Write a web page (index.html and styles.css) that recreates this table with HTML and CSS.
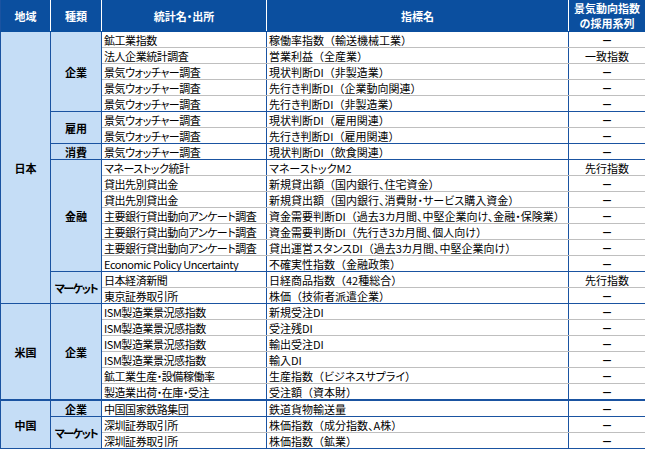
FILE: index.html
```html
<!DOCTYPE html>
<html lang="ja">
<head>
<meta charset="utf-8">
<title>景気動向指数</title>
<link rel="stylesheet" href="styles.css">
</head>
<body>
<table class="tbl">
<colgroup>
<col class="c1"><col class="c2"><col class="c3"><col class="c4"><col class="c5">
</colgroup>
<thead>
<tr class="head">
<th>地域</th><th>種類</th><th>統計名・出所</th><th>指標名</th><th class="last">景気動向指数<br>の採用系列</th>
</tr>
</thead>
<tbody>
<tr><td class="region" rowspan="17">日本</td><td class="cat" rowspan="5">企業</td><td class="s">鉱工業指数</td><td>稼働率指数<span class="pn">（</span>輸送機械工業<span class="pn">）</span></td><td class="val"><span class="dash">－</span></td></tr>
<tr><td class="s">法人企業統計調査</td><td>営業利益<span class="pn">（</span>全産業<span class="pn">）</span></td><td class="val">一致指数</td></tr>
<tr><td class="s">景気ウォッチャー調査</td><td>現状判断DI<span class="pn">（</span>非製造業<span class="pn">）</span></td><td class="val"><span class="dash">－</span></td></tr>
<tr><td class="s">景気ウォッチャー調査</td><td>先行き判断DI<span class="pn">（</span>企業動向関連<span class="pn">）</span></td><td class="val"><span class="dash">－</span></td></tr>
<tr class="end"><td class="s">景気ウォッチャー調査</td><td>先行き判断DI<span class="pn">（</span>非製造業<span class="pn">）</span></td><td class="val"><span class="dash">－</span></td></tr>
<tr><td class="cat" rowspan="2">雇用</td><td class="s">景気ウォッチャー調査</td><td>現状判断DI<span class="pn">（</span>雇用関連<span class="pn">）</span></td><td class="val"><span class="dash">－</span></td></tr>
<tr class="end"><td class="s">景気ウォッチャー調査</td><td>先行き判断DI<span class="pn">（</span>雇用関連<span class="pn">）</span></td><td class="val"><span class="dash">－</span></td></tr>
<tr class="end"><td class="cat">消費</td><td class="s">景気ウォッチャー調査</td><td>現状判断DI<span class="pn">（</span>飲食関連<span class="pn">）</span></td><td class="val"><span class="dash">－</span></td></tr>
<tr><td class="cat" rowspan="7">金融</td><td class="s">マネーストック統計</td><td>マネーストックM2</td><td class="val">先行指数</td></tr>
<tr><td class="s">貸出先別貸出金</td><td>新規貸出額<span class="pn">（</span>国内銀行、住宅資金<span class="pn">）</span></td><td class="val"><span class="dash">－</span></td></tr>
<tr><td class="s">貸出先別貸出金</td><td>新規貸出額<span class="pn">（</span>国内銀行、消費財・サービス購入資金<span class="pn">）</span></td><td class="val"><span class="dash">－</span></td></tr>
<tr><td class="s">主要銀行貸出動向アンケート調査</td><td>資金需要判断DI<span class="pn">（</span>過去3カ月間、中堅企業向け、金融・保険業<span class="pn">）</span></td><td class="val"><span class="dash">－</span></td></tr>
<tr><td class="s">主要銀行貸出動向アンケート調査</td><td>資金需要判断DI<span class="pn">（</span>先行き3カ月間、個人向け<span class="pn">）</span></td><td class="val"><span class="dash">－</span></td></tr>
<tr><td class="s">主要銀行貸出動向アンケート調査</td><td>貸出運営スタンスDI<span class="pn">（</span>過去3カ月間、中堅企業向け<span class="pn">）</span></td><td class="val"><span class="dash">－</span></td></tr>
<tr class="end"><td class="s">Economic Policy Uncertainty</td><td>不確実性指数<span class="pn">（</span>金融政策<span class="pn">）</span></td><td class="val"><span class="dash">－</span></td></tr>
<tr><td class="cat mk" rowspan="2">マーケット</td><td class="s">日本経済新聞</td><td>日経商品指数<span class="pn">（</span>42種総合<span class="pn">）</span></td><td class="val">先行指数</td></tr>
<tr class="end"><td class="s">東京証券取引所</td><td>株価<span class="pn">（</span>技術者派遣企業<span class="pn">）</span></td><td class="val"><span class="dash">－</span></td></tr>
<tr><td class="region thick" rowspan="6">米国</td><td class="cat thick" rowspan="6">企業</td><td class="s">ISM製造業景況感指数</td><td>新規受注DI</td><td class="val"><span class="dash">－</span></td></tr>
<tr><td class="s">ISM製造業景況感指数</td><td>受注残DI</td><td class="val"><span class="dash">－</span></td></tr>
<tr><td class="s">ISM製造業景況感指数</td><td>輸出受注DI</td><td class="val"><span class="dash">－</span></td></tr>
<tr><td class="s">ISM製造業景況感指数</td><td>輸入DI</td><td class="val"><span class="dash">－</span></td></tr>
<tr><td class="s">鉱工業生産・設備稼働率</td><td>生産指数<span class="pn">（</span>ビジネスサプライ<span class="pn">）</span></td><td class="val"><span class="dash">－</span></td></tr>
<tr class="end thickend"><td class="s">製造業出荷・在庫・受注</td><td>受注額<span class="pn">（</span>資本財<span class="pn">）</span></td><td class="val"><span class="dash">－</span></td></tr>
<tr class="end"><td class="region" rowspan="3">中国</td><td class="cat">企業</td><td class="s">中国国家鉄路集団</td><td>鉄道貨物輸送量</td><td class="val"><span class="dash">－</span></td></tr>
<tr><td class="cat mk" rowspan="2">マーケット</td><td class="s">深圳証券取引所</td><td>株価指数<span class="pn">（</span>成分指数、A株<span class="pn">）</span></td><td class="val"><span class="dash">－</span></td></tr>
<tr class="end"><td class="s">深圳証券取引所</td><td>株価指数<span class="pn">（</span>鉱業<span class="pn">）</span></td><td class="val"><span class="dash">－</span></td></tr>
</tbody>
</table>
</body>
</html>
```
FILE: styles.css
```css
html, body {
  margin: 0;
  padding: 0;
  background: #ffffff;
}
body {
  font-family: "Noto Sans CJK JP", "Noto Sans", sans-serif;
  font-size: 11px;
  color: #000;
  font-feature-settings: "palt";
}
.tbl {
  border-collapse: collapse;
  table-layout: fixed;
  width: 645px;
}
.c1 { width: 50px; }
.c2 { width: 51px; }
.c3 { width: 165px; }
.c4 { width: 302px; }
.c5 { width: 77px; }

.head th {
  height: 31px;
  padding: 0;
  background: #0b4f9f;
  color: #fff;
  font-weight: bold;
  font-size: 11px;
  line-height: 16px;
  text-align: center;
  vertical-align: middle;
  border-left: 1px solid #ffffff;
  border-right: 1px solid #ffffff;
  border-top: none;
  border-bottom: 1px solid #0b4f9f;
}
.head th:first-child { border-left: 1px solid #1a53a1; }
.head th.last { border-right: 1px solid #1a53a1; line-height: 15px; }

td {
  height: 15px;
  padding: 0 2px;
  line-height: 14px;
  white-space: nowrap;
  overflow: hidden;
  vertical-align: middle;
  border-top: 1px solid #bfbfbf;
  border-bottom: 1px solid #bfbfbf;
  border-left: 1px solid #1a53a1;
  border-right: 1px solid #1a53a1;
}
.end td { border-bottom-color: #1a53a1; }
.thickend td { border-bottom: 2px solid #1a53a1; }

td.s { letter-spacing: -0.45px; }
.pn { font-feature-settings: normal; }
.dash { font-weight: bold; }

.region, .cat {
  background: #c5ddf6;
  font-weight: bold;
  text-align: center;
  border: 1px solid #1a53a1;
  padding: 0;
}
.cat.mk { letter-spacing: -1.5px; }
.region.thick, .cat.thick { border-bottom: 2px solid #1a53a1; }
.val { text-align: center; padding: 0; }
```
